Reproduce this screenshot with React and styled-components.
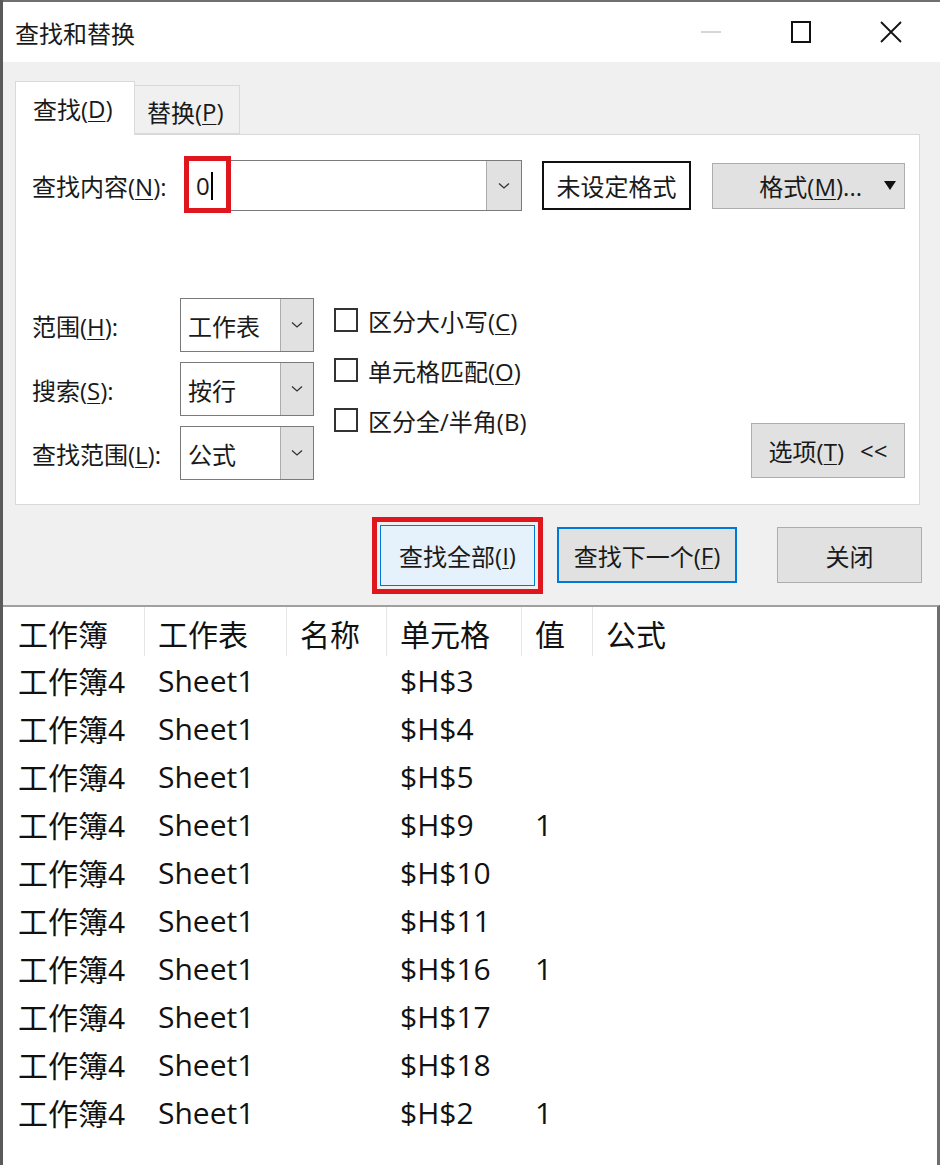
import React from "react";
import styled, { createGlobalStyle } from "styled-components";

const GlobalStyle = createGlobalStyle`
  html, body {
    margin: 0;
    padding: 0;
    background: #fff;
  }
  body {
    font-family: "Open Sans", "Noto Sans CJK SC", sans-serif;
    color: #1a1a1a;
  }
`;

const Window = styled.div`
  width: 940px;
  height: 1165px;
  box-sizing: border-box;
  border-left: 3px solid #5a5a5a;
  display: flex;
  flex-direction: column;
  overflow: hidden;
`;

const TitleBar = styled.div`
  height: 62px;
  box-sizing: border-box;
  border-top: 2px solid #707070;
  background: #fff;
  display: flex;
  align-items: center;
  padding-left: 12px;
  font-size: 24px;
`;

const Title = styled.span`
  flex: 1;
`;

const WinButton = styled.div`
  width: 90px;
  height: 100%;
  display: flex;
  align-items: center;
  justify-content: center;
`;

const Body = styled.div`
  background: #f0f0f0;
  padding: 19px 20px 0 12px;
  display: flex;
  flex-direction: column;
  font-size: 24px;
`;

const TabStrip = styled.div`
  display: flex;
  align-items: flex-end;
  height: 53px;
`;

const Tab = styled.div`
  box-sizing: border-box;
  display: flex;
  align-items: center;
  border: 1px solid #d9d9d9;
  position: relative;
  ${({ $active }) =>
    $active
      ? `
    width: 120px;
    height: 54px;
    margin-bottom: -1px;
    background: #fff;
    border-bottom: none;
    padding-left: 17px;
    z-index: 1;
  `
      : `
    width: 105px;
    height: 49px;
    background: #f0f0f0;
    border-left: none;
    padding-left: 12px;
    padding-top: 4px;
  `}
`;

const Key = styled.span`
  text-decoration: ${({ $plain }) => ($plain ? "none" : "underline")};
  text-underline-offset: 3px;
  text-decoration-thickness: 1px;
`;

const Panel = styled.div`
  background: #fff;
  border: 1px solid #d9d9d9;
  height: 371px;
  box-sizing: border-box;
  padding: 25px 14px 0 16px;
  display: flex;
  flex-direction: column;
`;

const FindRow = styled.div`
  display: flex;
  align-items: center;
  height: 51px;
`;

const Label = styled.div`
  flex: 0 0 ${({ $w }) => $w}px;
  white-space: nowrap;
`;

const Combo = styled.div`
  position: relative;
  box-sizing: border-box;
  width: ${({ $w }) => $w}px;
  height: ${({ $h }) => $h}px;
  border: 1px solid #7a7a7a;
  background: #fff;
  display: flex;
`;

const ComboText = styled.div`
  flex: 1;
  display: flex;
  align-items: center;
  padding-left: ${({ $pad }) => $pad}px;
`;

const Caret = styled.span`
  display: inline-block;
  width: 2px;
  height: 28px;
  background: #000;
  margin-left: 1px;
`;

const DropButton = styled.div`
  width: ${({ $w }) => $w}px;
  background: #e1e1e1;
  border-left: 1px solid #adadad;
  display: flex;
  align-items: center;
  justify-content: center;
`;

const RedMark = styled.div`
  position: absolute;
  left: -2px;
  top: -5px;
  width: 47px;
  height: 57px;
  box-sizing: border-box;
  border: 5px solid #e0161e;
`;

const Button = styled.div`
  box-sizing: border-box;
  width: ${({ $w }) => $w}px;
  height: ${({ $h }) => $h}px;
  display: flex;
  align-items: center;
  justify-content: center;
  background: ${({ $bg }) => $bg || "#e1e1e1"};
  border: ${({ $border }) => $border || "1px solid #adadad"};
  white-space: nowrap;
`;

const FormatButton = styled(Button)`
  justify-content: flex-end;
  gap: 22px;
  padding-right: 8px;
  margin-left: 21px;
`;

const OptionsArea = styled.div`
  display: flex;
  align-items: flex-end;
  margin-top: 87px;
`;

const SelectGrid = styled.div`
  display: grid;
  grid-template-columns: 148px 134px;
  row-gap: 10px;
  align-items: center;
`;

const Checks = styled.div`
  align-self: flex-start;
  margin-top: -3px;
  margin-left: 20px;
  display: flex;
  flex-direction: column;
`;

const CheckRow = styled.div`
  display: flex;
  align-items: center;
  gap: 10px;
  height: 50px;
`;

const CheckBox = styled.div`
  width: 24px;
  height: 24px;
  box-sizing: border-box;
  border: 2px solid #333;
  background: #fff;
`;

const OptionsButton = styled(Button)`
  margin-left: auto;
  margin-bottom: 2px;
  gap: 16px;
`;

const ButtonRow = styled.div`
  height: 100px;
  display: flex;
  align-items: center;
  justify-content: flex-end;
  margin-right: -2px;
`;

const RedFrame = styled.div`
  border: 5px solid #e0161e;
  padding: 3px;
  margin-right: 14px;
`;

const Results = styled.div`
  flex: 1;
  background: #fff;
  border-top: 2px solid #a0a0a0;
  border-right: 3px solid #6e6e6e;
  font-size: 30px;
  color: #111;
`;

const Grid = styled.div`
  display: grid;
  grid-template-columns: 142px 142px 100px 135px 71px 1fr;
`;

const HeadCell = styled.div`
  height: 49px;
  padding-top: 2px;
  box-sizing: border-box;
  display: flex;
  align-items: center;
  padding-left: ${({ $first }) => ($first ? 15 : 13)}px;
  border-right: ${({ $last }) => ($last ? "none" : "1px solid #e6e6e6")};
  white-space: nowrap;
`;

const Cell = styled.div`
  height: 48px;
  display: flex;
  align-items: center;
  padding-left: ${({ $first }) => ($first ? 15 : 13)}px;
  white-space: nowrap;
`;

const Chevron = () => (
  <svg width="12" height="8" viewBox="0 0 12 8">
    <path d="M1 1.5 L6 6 L11 1.5" fill="none" stroke="#333" strokeWidth="1.3" />
  </svg>
);

const DownTriangle = () => (
  <svg width="12" height="9" viewBox="0 0 12 9">
    <path d="M0 0 H12 L6 9 Z" fill="#111" />
  </svg>
);

const columns = ["工作簿", "工作表", "名称", "单元格", "值", "公式"];

const rows = [
  ["$H$3", ""],
  ["$H$4", ""],
  ["$H$5", ""],
  ["$H$9", "1"],
  ["$H$10", ""],
  ["$H$11", ""],
  ["$H$16", "1"],
  ["$H$17", ""],
  ["$H$18", ""],
  ["$H$2", "1"],
];

const selects = [
  { label: "范围", key: "H", value: "工作表" },
  { label: "搜索", key: "S", value: "按行" },
  { label: "查找范围", key: "L", value: "公式" },
];

const checks = [
  { text: "区分大小写", key: "C" },
  { text: "单元格匹配", key: "O" },
  { text: "区分全/半角", key: "B", plain: true },
];

export default function App() {
  return (
    <>
      <GlobalStyle />
      <Window>
        <TitleBar>
          <Title>查找和替换</Title>
          <WinButton>
            <svg width="22" height="4" viewBox="0 0 22 4">
              <line x1="1" y1="2" x2="21" y2="2" stroke="#c9c9c9" strokeWidth="1.5" />
            </svg>
          </WinButton>
          <WinButton>
            <svg width="22" height="22" viewBox="0 0 22 22">
              <rect x="2" y="1" width="18" height="20" fill="none" stroke="#111" strokeWidth="2" />
            </svg>
          </WinButton>
          <WinButton style={{ marginRight: 4 }}>
            <svg width="24" height="24" viewBox="0 0 24 24">
              <path d="M2 2 L22 22 M22 2 L2 22" stroke="#111" strokeWidth="1.8" />
            </svg>
          </WinButton>
        </TitleBar>

        <Body>
          <TabStrip>
            <Tab $active>
              查找(<Key>D</Key>)
            </Tab>
            <Tab>
              替换(<Key>P</Key>)
            </Tab>
          </TabStrip>

          <Panel>
            <FindRow>
              <Label $w={153}>
                查找内容(<Key>N</Key>):
              </Label>
              <Combo $w={337} $h={51}>
                <ComboText $pad={10}>
                  0<Caret />
                </ComboText>
                <DropButton $w={34}>
                  <Chevron />
                </DropButton>
                <RedMark />
              </Combo>
              <Button
                $w={149}
                $h={49}
                $bg="#fff"
                $border="2px solid #111"
                style={{ marginLeft: 20 }}
              >
                未设定格式
              </Button>
              <FormatButton $w={193} $h={46}>
                <span>
                  格式(<Key>M</Key>)...
                </span>
                <DownTriangle />
              </FormatButton>
            </FindRow>

            <OptionsArea>
              <SelectGrid>
                {selects.map((s) => (
                  <React.Fragment key={s.key}>
                    <Label $w={148}>
                      {s.label}(<Key>{s.key}</Key>):
                    </Label>
                    <Combo $w={134} $h={54}>
                      <ComboText $pad={7}>{s.value}</ComboText>
                      <DropButton $w={32}>
                        <Chevron />
                      </DropButton>
                    </Combo>
                  </React.Fragment>
                ))}
              </SelectGrid>

              <Checks>
                {checks.map((c) => (
                  <CheckRow key={c.key}>
                    <CheckBox />
                    <span>
                      {c.text}(<Key $plain={c.plain}>{c.key}</Key>)
                    </span>
                  </CheckRow>
                ))}
              </Checks>

              <OptionsButton $w={154} $h={55}>
                <span>
                  选项(<Key>T</Key>)
                </span>
                <span>&lt;&lt;</span>
              </OptionsButton>
            </OptionsArea>
          </Panel>

          <ButtonRow>
            <RedFrame>
              <Button $w={155} $h={61} $bg="#e5f1fb" $border="1px solid #0078d7">
                查找全部(<Key>I</Key>)
              </Button>
            </RedFrame>
            <Button
              $w={180}
              $h={56}
              $border="2px solid #0078d7"
              style={{ marginRight: 40 }}
            >
              查找下一个(<Key>F</Key>)
            </Button>
            <Button $w={145} $h={56}>
              关闭
            </Button>
          </ButtonRow>
        </Body>

        <Results>
          <Grid>
            {columns.map((c, i) => (
              <HeadCell key={c} $first={i === 0} $last={i === columns.length - 1}>
                {c}
              </HeadCell>
            ))}
            {rows.map(([cell, val], i) => (
              <React.Fragment key={i}>
                <Cell $first>工作簿4</Cell>
                <Cell>Sheet1</Cell>
                <Cell />
                <Cell>{cell}</Cell>
                <Cell>{val}</Cell>
                <Cell />
              </React.Fragment>
            ))}
          </Grid>
        </Results>
      </Window>
    </>
  );
}
